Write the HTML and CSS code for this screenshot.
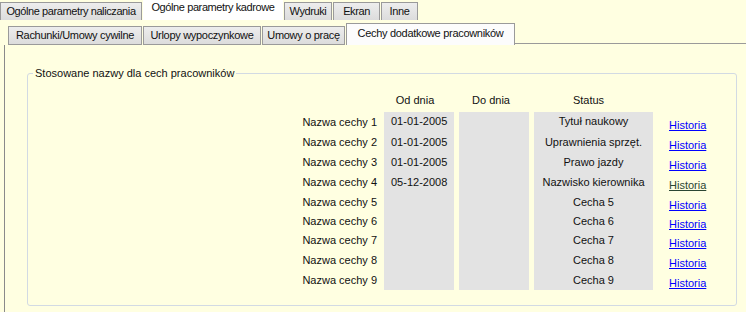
FILE: index.html
```html
<!DOCTYPE html>
<html lang="pl">
<head>
<meta charset="utf-8">
<link rel="stylesheet" href="styles.css">
</head>
<body>
<div class="tabs top">
  <div class="tab t1">Ogólne parametry naliczania</div>
  <div class="tab active">Ogólne parametry kadrowe</div>
  <div class="tab t3">Wydruki</div>
  <div class="tab t4">Ekran</div>
  <div class="tab t5">Inne</div>
</div>
<div class="inner">
  <div class="tabs sub">
    <div class="tab s1">Rachunki/Umowy cywilne</div>
    <div class="tab s2">Urlopy wypoczynkowe</div>
    <div class="tab s3">Umowy o pracę</div>
    <div class="tab active">Cechy dodatkowe pracowników</div>
    <div class="tabline"></div>
  </div>
  <div class="page">
    <fieldset class="group">
      <legend>Stosowane nazwy dla cech pracowników</legend>
      <div class="grid">
        <div class="hd"></div>
        <div class="hd h1">Od dnia</div>
        <div class="hd h2">Do dnia</div>
        <div class="hd h3">Status</div>
        <div class="hd"></div>

        <div class="lbl">Nazwa cechy 1</div><div class="cell c1 first">01-01-2005</div><div class="cell c2 first"></div><div class="cell c3 first">Tytuł naukowy</div><div class="lnk"><a href="#">Historia</a></div>
        <div class="lbl">Nazwa cechy 2</div><div class="cell c1">01-01-2005</div><div class="cell c2"></div><div class="cell c3">Uprawnienia sprzęt.</div><div class="lnk"><a href="#">Historia</a></div>
        <div class="lbl">Nazwa cechy 3</div><div class="cell c1">01-01-2005</div><div class="cell c2"></div><div class="cell c3">Prawo jazdy</div><div class="lnk"><a href="#">Historia</a></div>
        <div class="lbl">Nazwa cechy 4</div><div class="cell c1">05-12-2008</div><div class="cell c2"></div><div class="cell c3">Nazwisko kierownika</div><div class="lnk"><a href="#" class="visited">Historia</a></div>
        <div class="lbl">Nazwa cechy 5</div><div class="cell c1"></div><div class="cell c2"></div><div class="cell c3">Cecha 5</div><div class="lnk"><a href="#">Historia</a></div>
        <div class="lbl">Nazwa cechy 6</div><div class="cell c1"></div><div class="cell c2"></div><div class="cell c3">Cecha 6</div><div class="lnk"><a href="#">Historia</a></div>
        <div class="lbl">Nazwa cechy 7</div><div class="cell c1"></div><div class="cell c2"></div><div class="cell c3">Cecha 7</div><div class="lnk"><a href="#">Historia</a></div>
        <div class="lbl">Nazwa cechy 8</div><div class="cell c1"></div><div class="cell c2"></div><div class="cell c3">Cecha 8</div><div class="lnk"><a href="#">Historia</a></div>
        <div class="lbl">Nazwa cechy 9</div><div class="cell c1 last"></div><div class="cell c2 last"></div><div class="cell c3 last">Cecha 9</div><div class="lnk"><a href="#">Historia</a></div>
      </div>
    </fieldset>
  </div>
</div>
</body>
</html>
```
FILE: styles.css
```css
html, body {
  margin: 0;
  padding: 0;
}
body {
  width: 746px;
  height: 312px;
  overflow: hidden;
  background: #ffffe1;
  font-family: "Liberation Sans", Arial, sans-serif;
  font-size: 11px;
  color: #111;
}
.tabs {
  display: flex;
  align-items: flex-end;
}
.tabs.top {
  height: 20px;
  gap: 1px;
}
.tab {
  box-sizing: border-box;
  height: 18px;
  line-height: 16px;
  padding: 0;
  background: linear-gradient(#ededed, #dcdcdc);
  border: 1px solid #9a9a9a;
  border-bottom: none;
  white-space: nowrap;
  letter-spacing: -0.4px;
  text-align: center;
}
.t1 { width: 142px; }
.t3 { width: 48px; }
.t4 { width: 47px; }
.t5 { width: 37px; }
.tabs.top .tab.active {
  height: 21px;
  line-height: 17px;
  border: none;
  background: #ffffff;
  width: 140px;
}
.inner {
  margin-top: 3px;
  height: 289px;
  display: flex;
  flex-direction: column;
}
.tabs.sub {
  height: 22px;
  gap: 1px;
  padding-left: 8px;
}
.tabs.sub .tab {
  height: 19px;
  border-bottom: 1px solid #9a9a9a;
  letter-spacing: -0.3px;
}
.s1 { width: 134px; }
.s2 { width: 118px; }
.s3 { width: 83px; }
.tabs.sub .tab.active {
  height: 22px;
  line-height: 18px;
  border-bottom: none;
  background: #fcfcfc;
  width: 169px;
  margin-left: 0;
}
.tabline {
  flex: 1;
  height: 1px;
  background: #9a9a9a;
  align-self: flex-end;
  margin-bottom: 1px;
  margin-left: -1px;
}
.page {
  flex: 1;
  margin-left: 4px;
  border-left: 1px solid #8a8a8a;
  padding: 21px 9px 0 22px;
}
.group {
  margin: 0;
  padding: 0 0 12px 0;
  border: 1px solid #d2dae3;
  border-radius: 3px;
  height: 240px;
  box-sizing: border-box;
}
.group legend {
  padding: 0 2px;
  margin-left: 5px;
  line-height: 14px;
}
.grid {
  display: grid;
  grid-template-columns: 351px 70px 70px 119px auto;
  grid-template-rows: 22px 20px 20px 20px 20px 19px 19px 20px 20px 20px;
  column-gap: 5px;
  margin-top: 10px;
}
.hd {
  line-height: 21px;
  text-align: center;
}
.h1 { padding-right: 8px; }
.h2 { padding-right: 6px; }
.h3 { padding-right: 10px; }
.lbl {
  text-align: right;
  padding-right: 2px;
  line-height: 20px;
}
.cell {
  background: #e3e3e3;
  line-height: 20px;
}
.cell.first { line-height: 19px; }
.c1 { padding-left: 7px; }
.c3 { text-align: center; }
.lnk {
  padding-left: 11px;
  line-height: 26px;
  height: 20px;
}
.lnk a {
  color: #0000ff;
  text-decoration: underline;
}
.lnk a.visited {
  color: #2b4634;
}
```
